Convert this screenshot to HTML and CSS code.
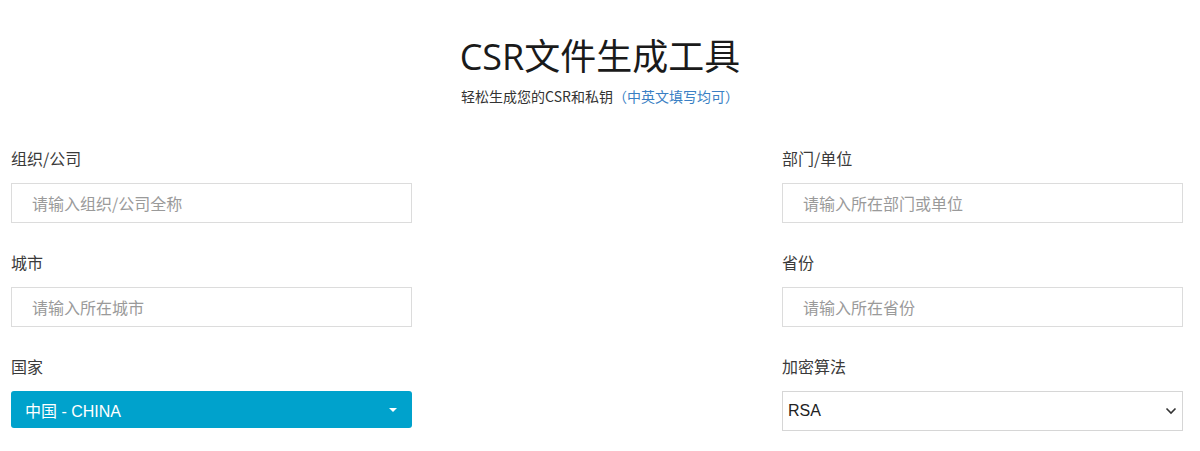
FILE: index.html
```html
<!DOCTYPE html>
<html lang="zh-CN">
<head>
<meta charset="utf-8">
<title>CSR文件生成工具</title>
<link rel="stylesheet" href="styles.css">
</head>
<body>
<header class="hero">
  <h1 class="title">CSR文件生成工具</h1>
  <p class="subtitle">轻松生成您的CSR和私钥<span class="hint">（中英文填写均可）</span></p>
</header>
<main class="form">
  <div class="col">
    <div class="group">
      <label class="label">组织/公司</label>
      <div class="input"><span class="ph">请输入组织/公司全称</span></div>
    </div>
    <div class="group">
      <label class="label">城市</label>
      <div class="input"><span class="ph">请输入所在城市</span></div>
    </div>
    <div class="group">
      <label class="label">国家</label>
      <div class="select-blue"><span>中国 - CHINA</span><span class="caret"></span></div>
    </div>
  </div>
  <div class="col">
    <div class="group">
      <label class="label">部门/单位</label>
      <div class="input"><span class="ph">请输入所在部门或单位</span></div>
    </div>
    <div class="group">
      <label class="label">省份</label>
      <div class="input"><span class="ph">请输入所在省份</span></div>
    </div>
    <div class="group">
      <label class="label">加密算法</label>
      <div class="select-plain"><span>RSA</span>
        <svg class="chev" width="12" height="8" viewBox="0 0 12 8"><path d="M1.5 1.5 L6 6 L10.5 1.5" fill="none" stroke="#333" stroke-width="1.6"/></svg>
      </div>
    </div>
  </div>
</main>
</body>
</html>
```
FILE: styles.css
```css
html, body {
  margin: 0;
  padding: 0;
  background: #fff;
}
body {
  font-family: "Noto Sans CJK SC", "Noto Sans", sans-serif;
  color: #333;
  width: 1200px;
  height: 451px;
  overflow: hidden;
}
.hero {
  text-align: center;
  padding-top: 33px;
}
.title {
  margin: 0;
  font-size: 36px;
  font-weight: 400;
  line-height: 48px;
  color: #1a1a1a;
  font-family: "Open Sans", "Noto Sans CJK SC", sans-serif;
}
.subtitle {
  margin: 5px 0 0;
  font-size: 14px;
  line-height: 20px;
  color: #333;
}
.hint {
  color: #3a7fc4;
}
.form {
  display: flex;
  justify-content: space-between;
  padding: 40px 17px 0 11px;
}
.col {
  width: 401px;
}
.group {
  margin-bottom: 27px;
}
.label {
  display: block;
  font-size: 16px;
  line-height: 24px;
  margin-bottom: 13px;
  color: #3a3a3a;
}
.input {
  box-sizing: border-box;
  height: 40px;
  border: 1px solid #dcdcdc;
  padding: 0 20px;
  display: flex;
  align-items: center;
  font-size: 16px;
}
.ph {
  color: #9a9a9a;
}
.select-blue {
  box-sizing: border-box;
  height: 37px;
  background: #00a2cc;
  border-radius: 3px;
  color: #fff;
  display: flex;
  align-items: center;
  justify-content: space-between;
  padding: 0 15px 0 14px;
  font-family: "Liberation Sans", "Noto Sans CJK SC", sans-serif;
  font-size: 16px;
}
.caret {
  width: 0;
  height: 0;
  border-left: 4px solid transparent;
  border-right: 4px solid transparent;
  border-top: 4px solid #fff;
}
.select-plain {
  box-sizing: border-box;
  height: 40px;
  border: 1px solid #d6d6d6;
  display: flex;
  align-items: center;
  justify-content: space-between;
  padding: 0 5px 0 5px;
  font-family: "Liberation Sans", "Noto Sans CJK SC", sans-serif;
  font-size: 16px;
  color: #222;
}
.chev {
  display: block;
}
```
